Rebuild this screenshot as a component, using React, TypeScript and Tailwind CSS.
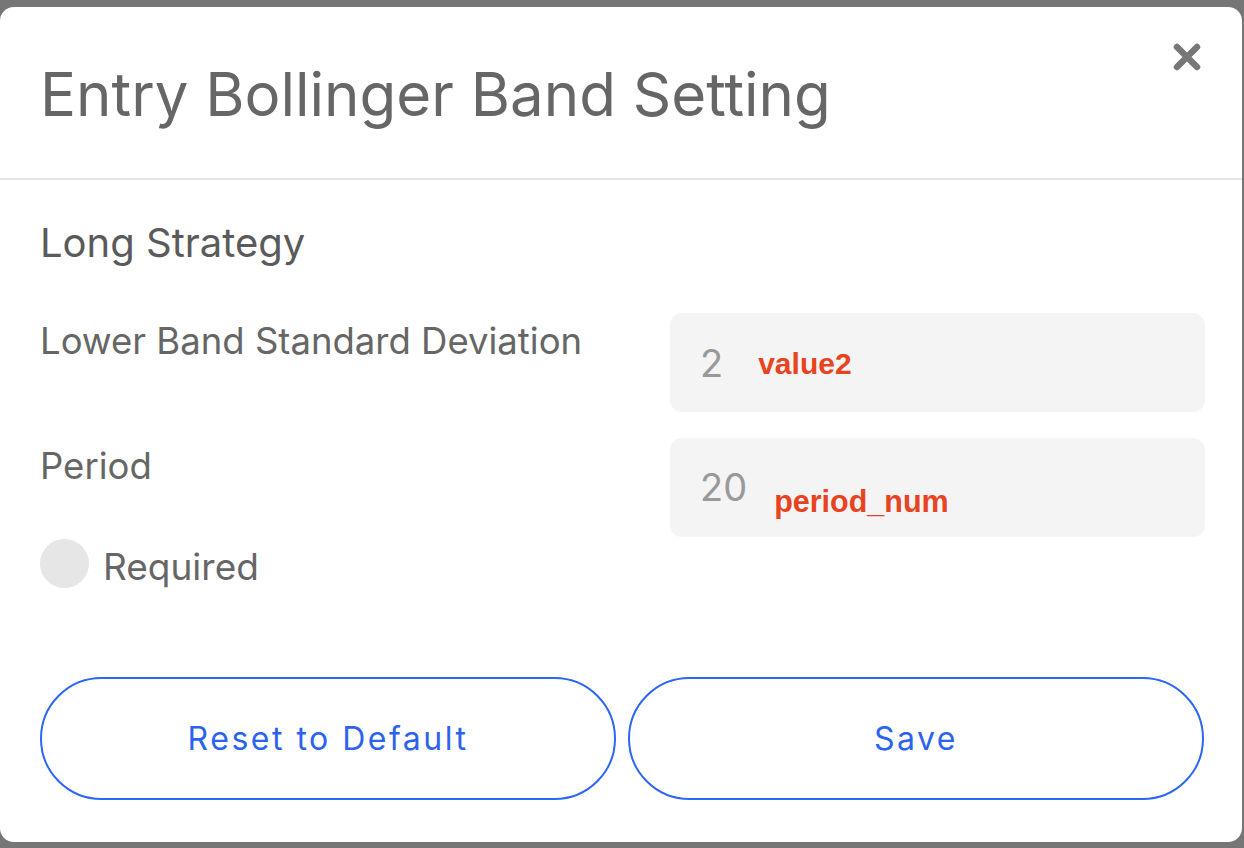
import React from 'react'

const CloseIcon = () => (
  <svg width="30" height="30" viewBox="0 0 30 30" className="block">
    <path d="M5 5 L25 25 M25 5 L5 25" stroke="#777777" strokeWidth="6.5" strokeLinecap="round" />
  </svg>
)

const App = () => {
  return (
    <div className="w-[1244px] h-[848px] bg-[#767676] pt-[7px] pr-[2px] overflow-hidden" style={{ fontFamily: 'Inter, "Noto Sans", sans-serif' }}>
      <div className="w-[1242px] h-[835px] bg-white rounded-[14px] flex flex-col">
        <div className="h-[173px] border-b-2 border-[#e3e6e9] flex justify-between items-start pl-[40px] pr-[40px]">
          <h1 className="mt-[55px] text-[60px] leading-[64px] text-[#666666]">Entry Bollinger Band Setting</h1>
          <div className="mt-[35px]">
            <CloseIcon />
          </div>
        </div>

        <div className="flex flex-col pl-[40px] pr-[38px] pt-[39px]">
          <div className="text-[40px] leading-[48px] text-[#5a5a5a]">Long Strategy</div>

          <div className="mt-[46px] grid grid-cols-[590px_535px] gap-x-[40px] gap-y-[26px]">
            <div className="text-[36.5px] leading-[56px] text-[#666666]">Lower Band Standard Deviation</div>
            <div className="h-[99px] rounded-[12px] bg-[#f4f4f4] flex items-center pl-[30px]">
              <span className="text-[38px] text-[#999999] leading-none">2</span>
              <span className="ml-[35px] mt-[2px] text-[30px] font-bold text-[#e8431f] leading-none" style={{ fontFamily: '"Liberation Sans", Arial, sans-serif' }}>value2</span>
            </div>

            <div className="flex flex-col">
              <div className="text-[36.5px] leading-[56px] text-[#666666]">Period</div>
              <div className="mt-[40px] flex items-center gap-[14px]">
                <div className="w-[49px] h-[49px] rounded-full bg-[#e6e6e6]" />
                <span className="text-[37px] leading-[50px] pt-[8px] text-[#666666]">Required</span>
              </div>
            </div>
            <div className="h-[99px] rounded-[12px] bg-[#f4f4f4] flex items-center pl-[30px]">
              <span className="text-[38px] text-[#999999] leading-none -mt-[2px]">20</span>
              <span className="ml-[27px] mt-[28px] text-[30.5px] font-bold text-[#e8431f] leading-none" style={{ fontFamily: '"Liberation Sans", Arial, sans-serif' }}>period_num</span>
            </div>
          </div>

          <div className="mt-[85px] w-[1164px] grid grid-cols-2 gap-x-[12px]">
            <button className="h-[123px] rounded-full border-2 border-[#2c66f5] text-[#2b63f0] text-[32px] tracking-[2.5px]">Reset to Default</button>
            <button className="h-[123px] rounded-full border-2 border-[#2c66f5] text-[#2b63f0] text-[32px] tracking-[2.5px]">Save</button>
          </div>
        </div>
      </div>
    </div>
  )
}

export default App
